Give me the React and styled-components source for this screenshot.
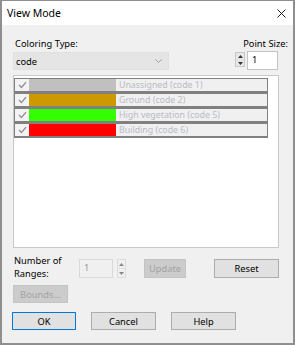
import React from "react";
import styled, { createGlobalStyle } from "styled-components";

const Global = createGlobalStyle`
  html, body { margin: 0; padding: 0; background: #f0f0f0; }
  * { box-sizing: border-box; }
`;

const Window = styled.div`
  width: 295px;
  height: 345px;
  display: flex;
  flex-direction: column;
  border: 2px solid #8f8f8f;
  border-top-width: 1px;
  font-family: "Noto Sans", "DejaVu Sans", sans-serif;
  font-size: 9.3px;
  color: #000;
  overflow: hidden;
`;

const TitleBar = styled.div`
  height: 24px;
  background: #fff;
  display: flex;
  align-items: center;
  justify-content: space-between;
  padding: 0 7px 0 5px;
  font-size: 10.5px;
  flex: none;
`;

const Body = styled.div`
  flex: 1;
  background: #f0f0f0;
  display: flex;
  flex-direction: column;
  padding: 11px 14px 0 11px;
`;

const Top = styled.div`
  display: flex;
  justify-content: space-between;
  align-items: flex-end;
`;

const Col = styled.div`
  display: flex;
  flex-direction: column;
  align-items: ${(p) => (p.$end ? "flex-end" : "flex-start")};
`;

const Label = styled.div`
  line-height: 15px;
  height: 15px;
  white-space: nowrap;
  margin-left: ${(p) => p.$ml || 0}px;
  margin-right: ${(p) => p.$mr || 0}px;
`;

const Select = styled.div`
  margin-top: 1px;
  width: 156px;
  height: 18px;
  background: #e5e5e5;
  border: 1px solid #e0e0e0;
  display: flex;
  align-items: center;
  justify-content: space-between;
  padding: 0 6px 0 2px;
`;

const SpinRow = styled.div`
  display: flex;
  align-items: flex-start;
  margin-right: 1px;
`;

const SpinArrows = styled.div`
  width: ${(p) => p.$w}px;
  height: ${(p) => p.$h}px;
  margin-top: ${(p) => p.$mt || 0}px;
  margin-left: ${(p) => p.$ml || 0}px;
  display: flex;
  flex-direction: column;
  border: 1px solid ${(p) => (p.$disabled ? "#dcdcdc" : "#c8c8c8")};
  background: ${(p) => (p.$disabled ? "#f0f0f0" : "#e8e8e8")};
`;

const Arrow = styled.div`
  flex: 1;
  display: flex;
  align-items: center;
  justify-content: center;
  & + & { border-top: 1px solid ${(p) => (p.$disabled ? "#e2e2e2" : "#d0d0d0")}; }
`;

const NumInput = styled.div`
  width: ${(p) => p.$w}px;
  height: 19px;
  margin-left: ${(p) => p.$ml || 0}px;
  background: ${(p) => (p.$disabled ? "#f0f0f0" : "#fff")};
  border: 1px solid ${(p) => (p.$disabled ? "#d9d9d9" : "#c4c4c4")};
  color: ${(p) => (p.$disabled ? "#9a9a9a" : "#000")};
  padding-left: 4px;
  line-height: 16px;
`;

const ListBox = styled.div`
  margin-top: 5px;
  height: 173px;
  background: #fff;
  border: 1px solid #c9c9c9;
  padding: 2px 10px 0 0;
  display: flex;
  flex-direction: column;
`;

const ItemRow = styled.div`
  height: 15px;
  width: 254px;
  display: flex;
  border: 1px solid #808080;
  border-bottom-width: 2px;
`;

const CheckCell = styled.div`
  width: 14px;
  background: #f3f3f3;
  display: flex;
  align-items: center;
  justify-content: center;
`;

const Swatch = styled.div`
  width: 87px;
  background: ${(p) => p.$color};
`;

const ItemLabel = styled.div`
  flex: 1;
  background: #f0f0f0;
  color: #b7bbc5;
  font-size: 8.8px;
  line-height: 12px;
  padding-left: 3px;
  white-space: nowrap;
  overflow: hidden;
`;

const RangeRow = styled.div`
  margin-top: 7px;
  display: flex;
  align-items: flex-start;
  height: 24px;
`;

const RangeLabel = styled.div`
  width: 66px;
  padding-left: 1px;
  line-height: 13px;
  margin-top: -1px;
`;

const RangeControls = styled.div`
  margin-top: 4px;
  display: flex;
  align-items: flex-start;
`;

const Button = styled.div`
  width: ${(p) => p.$w}px;
  height: ${(p) => p.$h || 19}px;
  margin-left: ${(p) => p.$ml || 0}px;
  display: flex;
  align-items: center;
  justify-content: center;
  background: ${(p) => (p.$disabled ? "#cccccc" : "#e1e1e1")};
  border: 1px solid ${(p) => (p.$default ? "#0078d7" : p.$disabled ? "#c4c4c4" : "#adadad")};
  color: ${(p) => (p.$disabled ? "#a2a2a2" : "#000")};
  flex: none;
`;

const ButtonRow = styled.div`
  display: flex;
  margin-top: ${(p) => p.$mt || 0}px;
  margin-left: ${(p) => p.$ml || 0}px;
`;

const Check = () => (
  <svg width="9" height="8" viewBox="0 0 9 8">
    <path d="M1 4 L3.5 6.5 L8 1.2" fill="none" stroke="#8d8f96" strokeWidth="1.3" />
  </svg>
);

const Up = ({ c = "#333" }) => (
  <svg width="5" height="3" viewBox="0 0 5 3"><path d="M0 3 L2.5 0 L5 3Z" fill={c} /></svg>
);
const Down = ({ c = "#333" }) => (
  <svg width="5" height="3" viewBox="0 0 5 3"><path d="M0 0 L2.5 3 L5 0Z" fill={c} /></svg>
);

const items = [
  { color: "#c0c0c0", label: "Unassigned (code 1)" },
  { color: "#cc9900", label: "Ground (code 2)" },
  { color: "#33ff00", label: "High vegetation (code 5)" },
  { color: "#ff0000", label: "Building (code 6)" },
];

export default function App() {
  return (
    <>
      <Global />
      <Window>
        <TitleBar>
          <span>View Mode</span>
          <svg width="9" height="9" viewBox="0 0 9 9">
            <path d="M0.5 0.5 L8.5 8.5 M8.5 0.5 L0.5 8.5" stroke="#222" strokeWidth="1" />
          </svg>
        </TitleBar>
        <Body>
          <Top>
            <Col>
              <Label $ml={2}>Coloring Type:</Label>
              <Select>
                <span>code</span>
                <svg width="7" height="4" viewBox="0 0 7 4">
                  <path d="M0.5 0.5 L3.5 3.5 L6.5 0.5" fill="none" stroke="#9a9a9a" strokeWidth="1" />
                </svg>
              </Select>
            </Col>
            <Col $end>
              <Label $mr={-9}>Point Size:</Label>
              <SpinRow>
                <SpinArrows $w={10} $h={15} $mt={1}>
                  <Arrow><Up /></Arrow>
                  <Arrow><Down /></Arrow>
                </SpinArrows>
                <NumInput $w={31} $ml={2}>1</NumInput>
              </SpinRow>
            </Col>
          </Top>
          <ListBox>
            {items.map((it) => (
              <ItemRow key={it.label}>
                <CheckCell><Check /></CheckCell>
                <Swatch $color={it.color} />
                <ItemLabel>{it.label}</ItemLabel>
              </ItemRow>
            ))}
          </ListBox>
          <RangeRow>
            <RangeLabel>Number of<br />Ranges:</RangeLabel>
            <RangeControls>
              <NumInput $w={34} $disabled>1</NumInput>
              <SpinArrows $w={9} $h={19} $ml={4} $disabled>
                <Arrow $disabled><Up c="#888" /></Arrow>
                <Arrow $disabled><Down c="#888" /></Arrow>
              </SpinArrows>
              <Button $w={42} $ml={18} $disabled>Update</Button>
              <Button $w={65} $ml={28}>Reset</Button>
            </RangeControls>
          </RangeRow>
          <ButtonRow $mt={6}>
            <Button $w={55} $h={18} $disabled>Bounds...</Button>
          </ButtonRow>
          <ButtonRow $mt={9} $ml={-1}>
            <Button $w={64} $h={18} $default>OK</Button>
            <Button $w={65} $h={18} $ml={15}>Cancel</Button>
            <Button $w={65} $h={18} $ml={15}>Help</Button>
          </ButtonRow>
        </Body>
      </Window>
    </>
  );
}
